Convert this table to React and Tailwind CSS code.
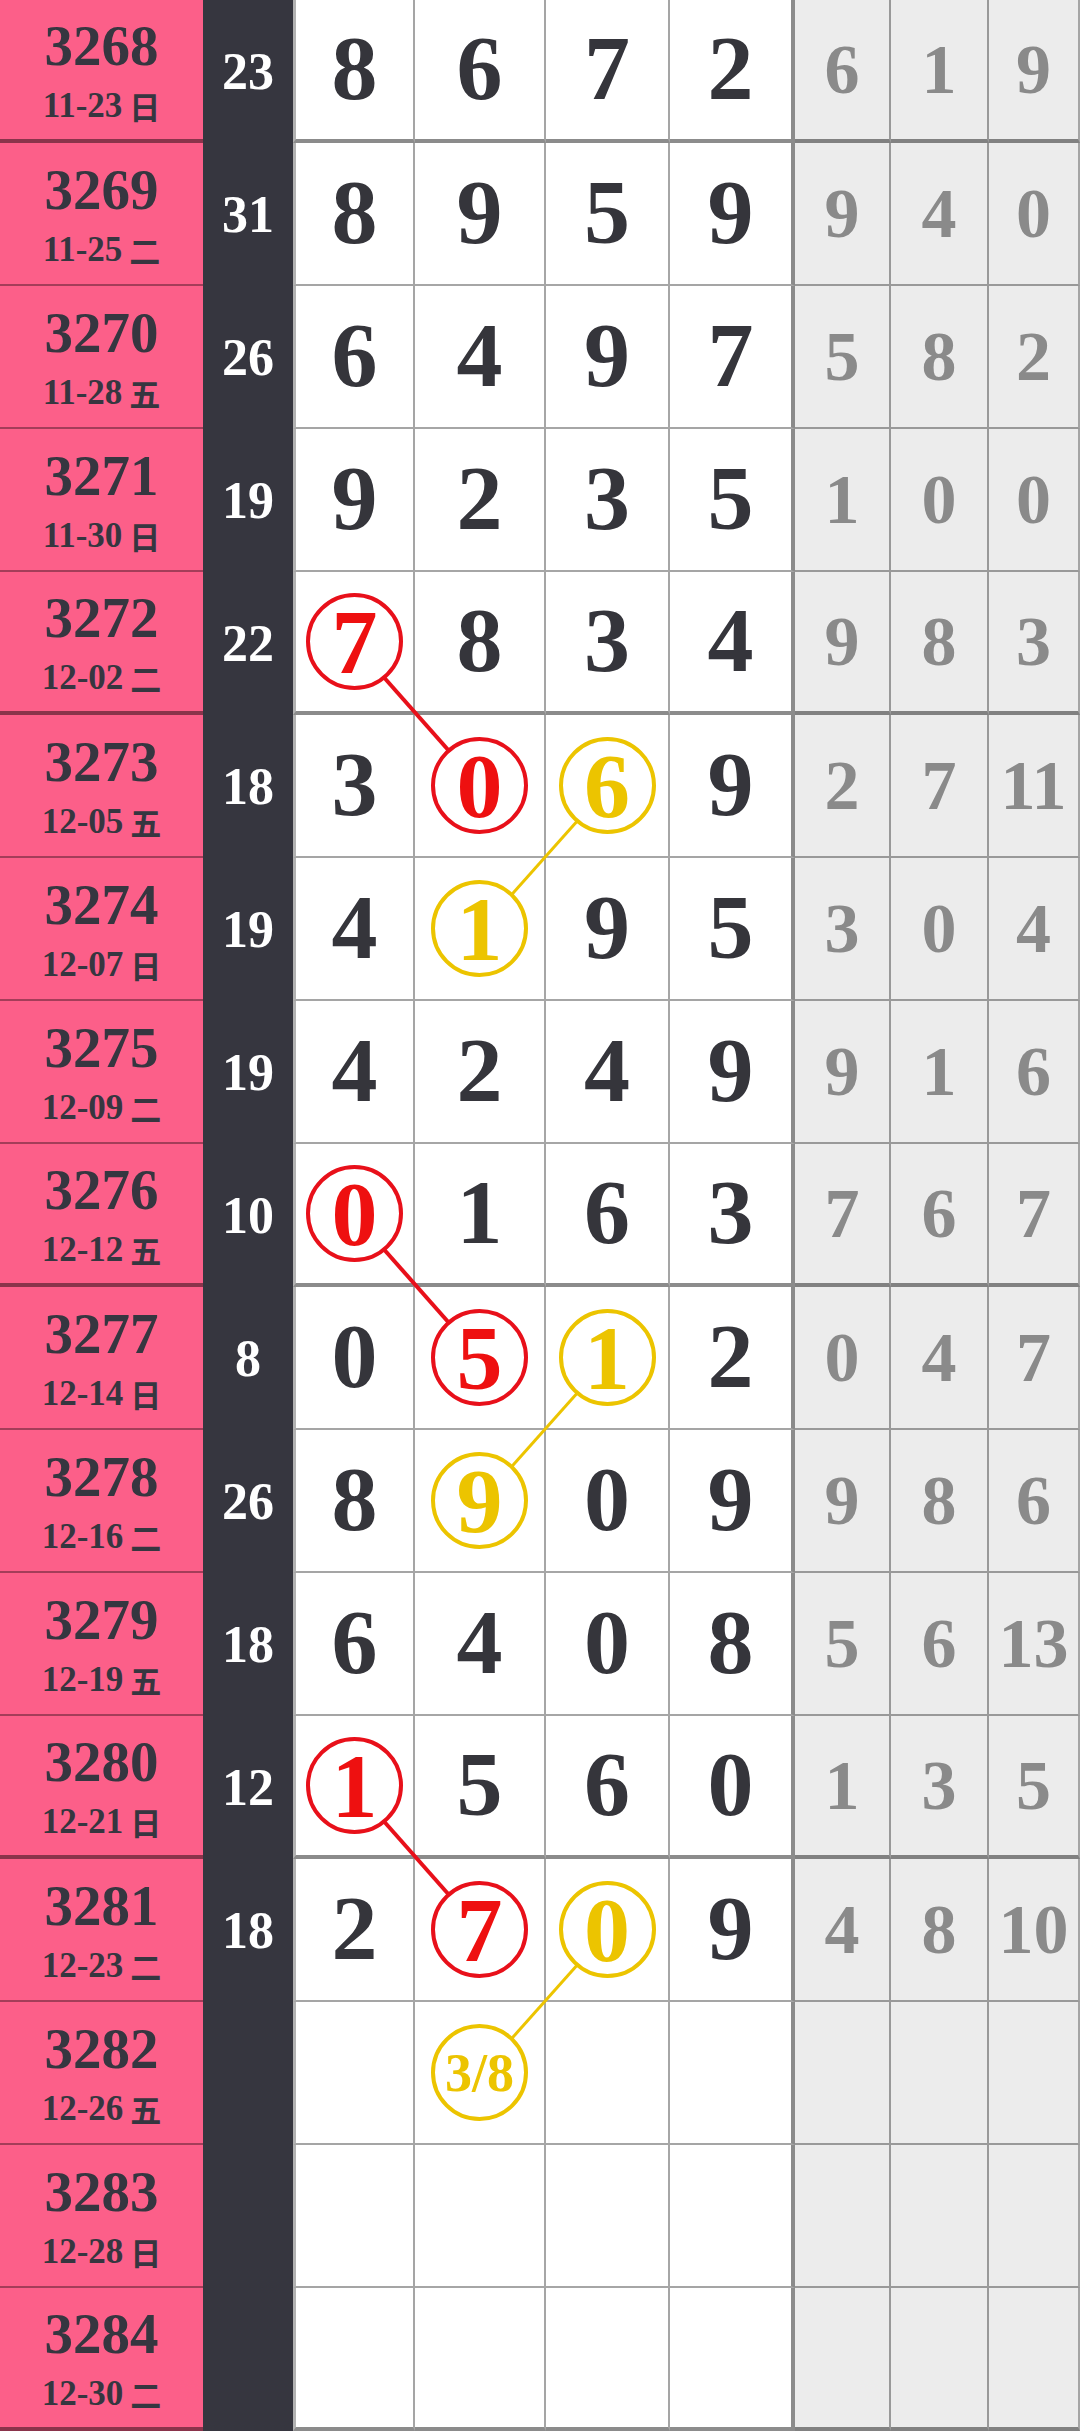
const rows = [
  { no: 3268, date: "11-23", day: "日", sum: 23, main: [8, 6, 7, 2], side: [6, 1, 9] },
  { no: 3269, date: "11-25", day: "二", sum: 31, main: [8, 9, 5, 9], side: [9, 4, 0] },
  { no: 3270, date: "11-28", day: "五", sum: 26, main: [6, 4, 9, 7], side: [5, 8, 2] },
  { no: 3271, date: "11-30", day: "日", sum: 19, main: [9, 2, 3, 5], side: [1, 0, 0] },
  { no: 3272, date: "12-02", day: "二", sum: 22, main: [7, 8, 3, 4], side: [9, 8, 3] },
  { no: 3273, date: "12-05", day: "五", sum: 18, main: [3, 0, 6, 9], side: [2, 7, 11] },
  { no: 3274, date: "12-07", day: "日", sum: 19, main: [4, 1, 9, 5], side: [3, 0, 4] },
  { no: 3275, date: "12-09", day: "二", sum: 19, main: [4, 2, 4, 9], side: [9, 1, 6] },
  { no: 3276, date: "12-12", day: "五", sum: 10, main: [0, 1, 6, 3], side: [7, 6, 7] },
  { no: 3277, date: "12-14", day: "日", sum: 8, main: [0, 5, 1, 2], side: [0, 4, 7] },
  { no: 3278, date: "12-16", day: "二", sum: 26, main: [8, 9, 0, 9], side: [9, 8, 6] },
  { no: 3279, date: "12-19", day: "五", sum: 18, main: [6, 4, 0, 8], side: [5, 6, 13] },
  { no: 3280, date: "12-21", day: "日", sum: 12, main: [1, 5, 6, 0], side: [1, 3, 5] },
  { no: 3281, date: "12-23", day: "二", sum: 18, main: [2, 7, 0, 9], side: [4, 8, 10] },
  { no: 3282, date: "12-26", day: "五", sum: null, main: ["", "3/8", "", ""], side: ["", "", ""] },
  { no: 3283, date: "12-28", day: "日", sum: null, main: ["", "", "", ""], side: ["", "", ""] },
  { no: 3284, date: "12-30", day: "二", sum: null, main: ["", "", "", ""], side: ["", "", ""] }
];

// circled picks: "row-col" -> colour
const marks = {
  "4-0": "red", "5-1": "red", "8-0": "red", "9-1": "red", "12-0": "red", "13-1": "red",
  "5-2": "yellow", "6-1": "yellow", "9-2": "yellow", "10-1": "yellow", "13-2": "yellow", "14-1": "yellow"
};

const ROW_H = 143;
const colX = [354, 480.5, 608];
const cy = (r) => r * ROW_H + 71.5;

const links = [
  { c: "#e8101a", w: 4, a: [0, 4], b: [1, 5] },
  { c: "#ecc400", w: 3, a: [2, 5], b: [1, 6] },
  { c: "#e8101a", w: 4, a: [0, 8], b: [1, 9] },
  { c: "#ecc400", w: 3, a: [2, 9], b: [1, 10] },
  { c: "#e8101a", w: 4, a: [0, 12], b: [1, 13] },
  { c: "#ecc400", w: 3, a: [2, 13], b: [1, 14] }
];

const Circle = ({ color, children }) => {
  const small = String(children).length > 2;
  return (
    <span
      className={
        "relative z-20 flex h-[97px] w-[97px] items-center justify-center rounded-full bg-white leading-none " +
        (color === "red"
          ? "border-4 border-[#e8101a] text-[#ee1010]"
          : "border-4 border-[#ecc400] text-[#ecc400]") +
        (small ? " text-[54px]" : " text-[92px]")
      }
    >
      {children}
    </span>
  );
};

const Row = ({ row, index }) => {
  const thick = index % 4 === 0;
  const bottom = thick ? "border-b-4 border-b-black/45" : "border-b-2 border-b-black/35";
  const mainBorders = [
    "border-l-[3px] border-l-black/30 border-r-2 border-r-black/35",
    "border-r-2 border-r-black/35",
    "border-r-2 border-r-black/35",
    "border-r-4 border-r-black/45"
  ];
  const sideBorders = ["border-r-2 border-r-black/35", "border-r-2 border-r-black/35", "border-r-2 border-r-black/30"];

  return (
    <div className="grid h-[143px] grid-cols-[203px_90px_122px_131px_124px_125px_96px_98px_91px]">
      <div className={"flex flex-col items-center justify-center gap-[14px] bg-[#fc5f89] text-[#363640] " + bottom}>
        <span className="text-[57px] font-bold leading-none">{row.no}</span>
        <span className="flex items-center gap-[7px] text-[35px] font-bold leading-none">
          {row.date}
          <span className="font-['Noto_Sans_CJK_SC',sans-serif] text-[31px] font-bold">{row.day}</span>
        </span>
      </div>
      <div className="flex items-center justify-center bg-[#36363f] text-[52px] font-bold leading-none text-white">
        {row.sum}
      </div>
      {row.main.map((d, i) => {
        const mark = marks[`${index}-${i}`];
        return (
          <div
            key={i}
            className={"flex items-center justify-center bg-white text-[92px] font-bold leading-none text-[#35353b] " + mainBorders[i] + " " + bottom}
          >
            {mark ? <Circle color={mark}>{d}</Circle> : <span className="pb-[4px]">{d}</span>}
          </div>
        );
      })}
      {row.side.map((d, i) => (
        <div
          key={i}
          className={"flex items-center justify-center bg-[#ececec] text-[70px] font-bold leading-none text-[#8a8a8a] " + sideBorders[i] + " " + bottom}
        >
          {d}
        </div>
      ))}
    </div>
  );
};

const App = () => {
  return (
    <div className="relative w-[1080px] bg-white font-['Liberation_Serif','Noto_Sans_CJK_SC',serif]">
      {rows.map((row, index) => (
        <Row key={row.no} row={row} index={index} />
      ))}
      <svg className="pointer-events-none absolute inset-0 z-10" width="1080" height="2432" viewBox="0 0 1080 2432">
        {links.map((l, i) => (
          <line
            key={i}
            x1={colX[l.a[0]]}
            y1={cy(l.a[1])}
            x2={colX[l.b[0]]}
            y2={cy(l.b[1])}
            stroke={l.c}
            strokeWidth={l.w}
          />
        ))}
      </svg>
    </div>
  );
};

export default App;
